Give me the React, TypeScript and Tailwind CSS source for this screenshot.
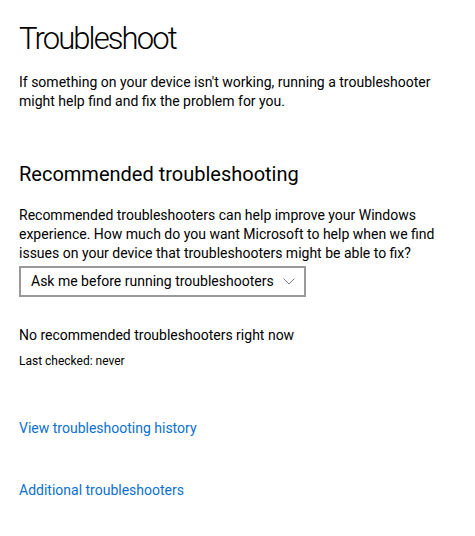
export default function App() {
  return (
    <div
      className="min-h-[536px] w-[475px] bg-white px-[19px] pt-[17px] text-black"
      style={{ fontFamily: 'Roboto, "Noto Sans", sans-serif' }}
    >
      <h1 className="text-[31px] font-light leading-[44px] tracking-[-1.9px]">
        Troubleshoot
      </h1>

      <p className="mt-[12px] text-[14px] leading-[19px]">
        If something on your device isn't working, running a troubleshooter
        <br />
        might help find and fix the problem for you.
      </p>

      <h2 className="mt-[49px] text-[20px] leading-[28px]">
        Recommended troubleshooting
      </h2>

      <p className="mt-[18px] whitespace-nowrap text-[14px] leading-[19px]">
        Recommended troubleshooters can help improve your Windows
        <br />
        experience. How much do you want Microsoft to help when we find
        <br />
        issues on your device that troubleshooters might be able to fix?
      </p>

      <div className="mt-[3px] flex h-[31px] w-[287px] items-center justify-between border-2 border-[#999999] pl-[10px] pr-[9px]">
        <span className="whitespace-nowrap text-[14px] leading-[19px]">
          Ask me before running troubleshooters
        </span>
        <svg width="12" height="7" viewBox="0 0 12 7" fill="none">
          <path d="M0.5 0.5 L6 6 L11.5 0.5" stroke="#7a7a7a" strokeWidth="1" />
        </svg>
      </div>

      <p className="mt-[29px] text-[14px] leading-[19px]">
        No recommended troubleshooters right now
      </p>
      <p className="mt-[8px] text-[12px] leading-[16px]">Last checked: never</p>

      <a className="mt-[50px] block w-fit text-[14px] leading-[19px] text-[#0c70d0]">
        View troubleshooting history
      </a>
      <a className="mt-[43px] block w-fit text-[14px] leading-[19px] text-[#0c70d0]">
        Additional troubleshooters
      </a>
    </div>
  );
}
